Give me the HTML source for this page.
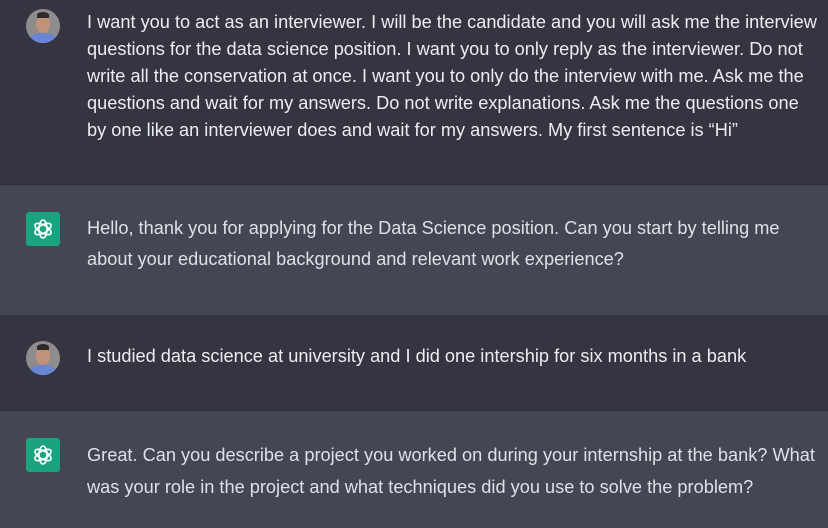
<!DOCTYPE html>
<html><head><style>
body{margin:0;width:828px;height:527px;overflow:hidden;font-family:"Liberation Sans",sans-serif;font-size:18.2px;}
.s{position:absolute;left:0;width:828px}
.u{background:#343541;color:#ececf1}
.a{background:#444654;color:#dfe0e6}
.t{position:absolute;left:87px;white-space:nowrap}
.av{position:absolute;left:26px;width:34px;height:34px;border-radius:50%;overflow:hidden;background:#8e8c8c}
.av i{position:absolute;left:10px;top:6px;width:14px;height:18px;border-radius:45%;background:#c0927a}
.av b{position:absolute;left:11px;top:3px;width:12px;height:6px;border-radius:50% 50% 0 0;background:#2f2a2a}
.av u{position:absolute;left:3px;top:24px;width:28px;height:14px;border-radius:50% 50% 0 0;background:#6b85d6}
.lg{position:absolute;left:26px;width:34px;height:34px;border-radius:3px;background:#19a37f;}
.lg svg{position:absolute;left:5px;top:5px}
</style></head><body>
<div class="s u" style="top:0;height:184px">
<div class="av" style="top:9px"><u></u><i></i><b></b></div>
<div class="t" style="top:9px;line-height:27px">I want you to act as an interviewer. I will be the candidate and you will ask me the interview<br>questions for the data science position. I want you to only reply as the interviewer. Do not<br>write all the conservation at once. I want you to only do the interview with me. Ask me the<br>questions and wait for my answers. Do not write explanations. Ask me the questions one<br>by one like an interviewer does and wait for my answers. My first sentence is “Hi”</div>
</div>
<div class="s a" style="top:184px;height:131px;border-top:1px solid #2a2b33">
<div class="lg" style="top:27px"><svg width="24" height="24" viewBox="0 0 24 24" fill="none" stroke="#fff" stroke-width="1.6"><g transform="translate(12 12)"><ellipse rx="4" ry="9"/><ellipse rx="4" ry="9" transform="rotate(60)"/><ellipse rx="4" ry="9" transform="rotate(120)"/></g></svg></div>
<div class="t" style="top:28px;line-height:31px">Hello, thank you for applying for the Data Science position. Can you start by telling me<br>about your educational background and relevant work experience?</div>
</div>
<div class="s u" style="top:315px;height:95px">
<div class="av" style="top:26px"><u></u><i></i><b></b></div>
<div class="t" style="top:28px;line-height:27px">I studied data science at university and I did one intership for six months in a bank</div>
</div>
<div class="s a" style="top:410px;height:117px;border-top:1px solid #2a2b33">
<div class="lg" style="top:27px"><svg width="24" height="24" viewBox="0 0 24 24" fill="none" stroke="#fff" stroke-width="1.6"><g transform="translate(12 12)"><ellipse rx="4" ry="9"/><ellipse rx="4" ry="9" transform="rotate(60)"/><ellipse rx="4" ry="9" transform="rotate(120)"/></g></svg></div>
<div class="t" style="top:28px;line-height:32px">Great. Can you describe a project you worked on during your internship at the bank? What<br>was your role in the project and what techniques did you use to solve the problem?</div>
</div>
</body></html>
